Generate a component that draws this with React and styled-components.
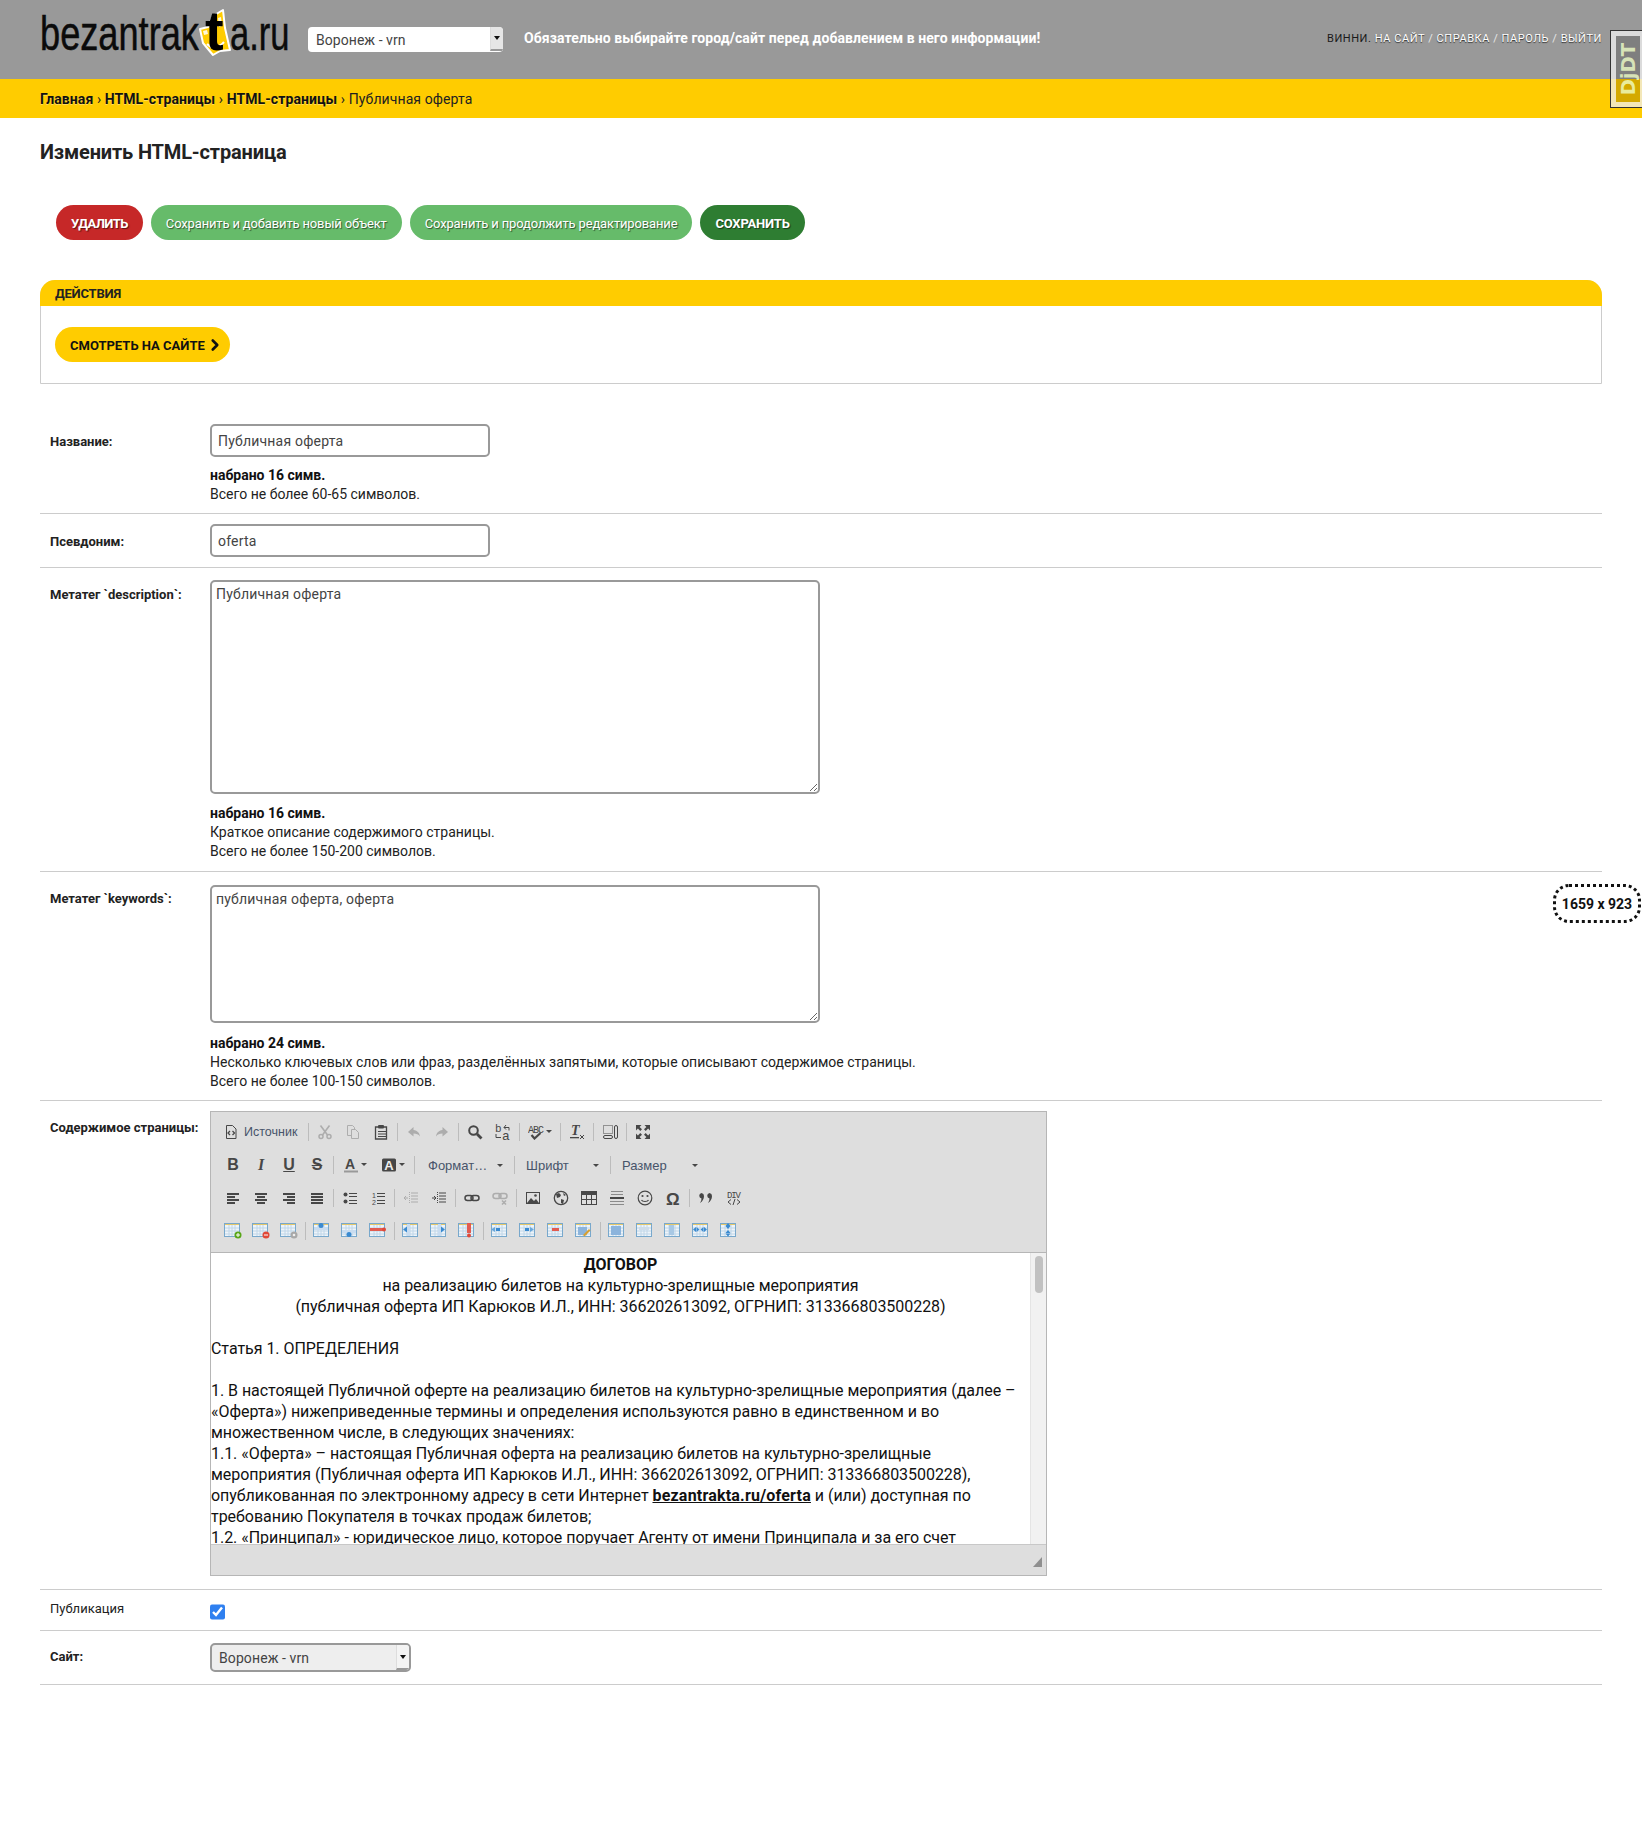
import React from 'react';
import styled, { createGlobalStyle } from 'styled-components';
import { ChevronRight } from 'lucide-react';

const Global = createGlobalStyle`
  html, body { margin: 0; padding: 0; background: #fff; }
  body { font-family: Roboto, "Liberation Sans", sans-serif; font-size: 14px; color: #222; position: relative; min-height: 1823px; }
  * { box-sizing: border-box; }
`;

const Header = styled.header`
  height: 79px;
  background: #999;
  display: flex;
  align-items: flex-start;
  padding: 0 40px;
`;

const Logo = styled.div`
  display: flex;
  width: 268px;
  height: 60px;
  font-family: "Liberation Sans", sans-serif;
  font-size: 48px;
  line-height: 48px;
  color: #0b0b0b;
  -webkit-text-stroke: .5px #0b0b0b;
  padding-top: 10px;
  white-space: nowrap;
  flex-shrink: 0;
`;

const LogoWord = styled.span`
  display: block;
  width: ${p => p.$w}px;
  flex-shrink: 0;
  transform: scaleX(${p => p.$s});
  transform-origin: left center;
`;

const LogoFace = styled.span`
  position: relative;
  display: block;
  width: 31px;
  height: 48px;
  flex-shrink: 0;
  svg { position: absolute; left: -19px; top: -10px; }
`;

const LogoT = styled.span`
  position: absolute;
  left: 6px;
  top: -7px;
  font-weight: 700;
  font-size: 56px;
  line-height: 56px;
  color: #000;
  -webkit-text-stroke: 0;
`;

const HeaderSelect = styled.div`
  width: 195px;
  height: 25px;
  margin-top: 27px;
  background: #fff;
  border-radius: 4px;
  display: flex;
  justify-content: space-between;
  font-size: 14px;
  line-height: 26px;
  letter-spacing: .05px;
  color: #444;
  padding-left: 8px;
  flex-shrink: 0;
  overflow: hidden;
`;

const SelectArrow = styled.span`
  width: 13px;
  background: ${p => (p.$muted ? '#f4f4f4' : '#e6e6e6')};
  border-bottom: 2px solid #999;
  border-left: 1px solid #ddd;
  height: ${p => (p.$muted ? '100%' : '24px')};
  display: flex;
  align-items: center;
  justify-content: center;
  &::after {
    content: '';
    border-left: 3px solid transparent;
    border-right: 3px solid transparent;
    border-top: 4px solid #111;
  }
`;

const Notice = styled.div`
  margin: 29px 0 0 21px;
  font-size: 14px;
  line-height: 19px;
  font-weight: 700;
  letter-spacing: .085px;
  color: #fff;
  white-space: nowrap;
`;

const UserTools = styled.div`
  margin: 31px 0 0 auto;
  font-size: 11px;
  line-height: 16px;
  letter-spacing: .55px;
  text-transform: uppercase;
  color: #e8e8e8;
  white-space: nowrap;
  a { color: #fff; text-shadow: 0 1px 1px #333; }
  strong { font-weight: 400; color: #1a1a1a; }
`;

const Crumbs = styled.div`
  height: 39px;
  background: #fc0;
  padding: 1px 40px 0;
  line-height: 39px;
  font-size: 14px;
  letter-spacing: .1px;
  color: #222;
  a { font-weight: 700; letter-spacing: .08px; color: #111; text-shadow: 0 1px 0 rgba(255, 255, 255, .35); }
`;

const Handle = styled.div`
  position: absolute;
  top: 31px;
  right: 0;
  width: 31px;
  height: 76px;
  border: 5px solid rgba(255, 255, 255, .72);
  border-right-width: 2px;
  outline: 1px solid #333;
  background: rgba(0, 0, 0, .17);
  display: flex;
  align-items: center;
  justify-content: center;
  span {
    writing-mode: vertical-rl;
    transform: rotate(180deg);
    font-family: "DejaVu Sans", sans-serif;
    font-weight: 700;
    font-size: 19.5px;
    color: rgba(240, 255, 200, .78);
  }
`;

const SizeBadge = styled.div`
  position: absolute;
  top: 884px;
  right: 1px;
  width: 88px;
  height: 39px;
  border: 3px dotted #111;
  border-radius: 16px;
  display: flex;
  align-items: center;
  justify-content: center;
  font-size: 14px;
  font-weight: 700;
  color: #111;
`;

const Main = styled.main`
  padding: 0 40px;
`;

const Title = styled.h1`
  margin: 0;
  padding-top: 21px;
  height: 87px;
  font-size: 20px;
  line-height: 26px;
  font-weight: 700;
  letter-spacing: -.15px;
  color: #222;
`;

const SubmitRow = styled.div`
  display: flex;
  gap: 8px;
  padding-left: 16px;
`;

const Pill = styled.button`
  height: 35px;
  border: 0;
  border-radius: 18px;
  padding: 1px 15px 0;
  background: ${p => p.$bg};
  color: #fff;
  font-family: inherit;
  font-size: 13px;
  font-weight: ${p => (p.$strong ? 700 : 400)};
  letter-spacing: ${p => p.$ls ?? -0.15}px;
  text-transform: ${p => (p.$strong ? 'uppercase' : 'none')};
  text-shadow: 1px 1px 1px rgba(0, 0, 0, .55);
`;

const Actions = styled.section`
  margin-top: 40px;
  height: 104px;
  border: 1px solid #ccc;
  border-radius: 15px 15px 0 0;
`;

const ActionsHead = styled.h2`
  margin: -1px -1px 0;
  height: 26px;
  background: #fc0;
  border-radius: 15px 15px 0 0;
  padding: 4px 15px 0;
  font-size: 13px;
  line-height: 19px;
  font-weight: 700;
  letter-spacing: -.2px;
  text-transform: uppercase;
  color: #222;
`;

const ViewLink = styled.a`
  display: inline-flex;
  align-items: center;
  gap: 1px;
  height: 35px;
  margin: 21px 0 0 14px;
  padding: 1px 6px 0 15px;
  border-radius: 18px;
  background: #fc0;
  font-size: 13px;
  font-weight: 700;
  text-transform: uppercase;
  color: #111;
`;

const Form = styled.form`
  margin-top: 30px;
`;

const Row = styled.div`
  display: flex;
  border-bottom: 1px solid #ccc;
  padding: ${p => p.$top ?? 10}px 0 ${p => p.$bottom ?? 10}px;
`;

const Label = styled.label`
  width: 170px;
  flex-shrink: 0;
  padding: ${p => p.$top ?? 8}px 0 0 10px;
  font-size: 13px;
  line-height: 19px;
  font-weight: ${p => (p.$plain ? 400 : 700)};
  color: #222;
`;

const TextInput = styled.input`
  display: block;
  width: 280px;
  height: 33px;
  border: 2px solid #999;
  border-radius: 5px;
  padding: 0 6px;
  font-family: inherit;
  font-size: 14px;
  letter-spacing: .2px;
  color: #444;
  background: #fff;
`;

const TextArea = styled.textarea`
  display: block;
  width: 610px;
  height: ${p => p.$h}px;
  border: 2px solid #999;
  border-radius: 5px;
  padding: 3px 4px;
  font-family: inherit;
  font-size: 14px;
  line-height: 19px;
  letter-spacing: .2px;
  color: #444;
  background: #fff;
`;

const Help = styled.div`
  margin-top: ${p => p.$top ?? 9}px;
  font-size: 14px;
  line-height: 19px;
  color: #222;
  strong { display: block; font-weight: 700; color: #111; }
`;

const Editor = styled.div`
  width: 837px;
  height: 465px;
  border: 1px solid #b6b6b6;
  background: #dedede;
  display: flex;
  flex-direction: column;
  position: relative;
`;

const Toolbar = styled.div`
  height: 141px;
  padding: 3px 0 0 8px;
  border-bottom: 1px solid #b6b6b6;
  flex-shrink: 0;
`;

const ToolRow = styled.div`
  height: 33px;
  display: flex;
  align-items: center;
`;

const ToolBtn = styled.span`
  width: ${p => p.$w ?? 28}px;
  height: 26px;
  display: flex;
  align-items: center;
  justify-content: center;
  flex-shrink: 0;
  color: #474747;
  opacity: ${p => (p.$off ? 0.32 : 1)};
  svg { display: block; }
`;

const Glyph = styled.span`
  font-family: ${p => (p.$serif ? '"Liberation Serif", serif' : '"Liberation Sans", sans-serif')};
  font-size: 16px;
  font-weight: 700;
  font-style: ${p => (p.$italic ? 'italic' : 'normal')};
  text-decoration: ${p => (p.$line ? p.$line : 'none')};
  color: #474747;
`;

const Sep = styled.i`
  display: block;
  width: 1px;
  height: 18px;
  margin: 0 2px;
  background: #bcbcbc;
  flex-shrink: 0;
`;

const SourceBtn = styled.span`
  display: flex;
  align-items: center;
  gap: 5px;
  padding: 0 6px 0 4px;
  width: 87px;
  flex-shrink: 0;
  font-family: "Liberation Sans", sans-serif;
  font-size: 12.5px;
  color: #47546a;
`;

const Combo = styled.span`
  width: ${p => p.$w}px;
  display: flex;
  align-items: center;
  justify-content: space-between;
  padding: 2px 9px 0 ${p => p.$pad ?? 11}px;
  font-family: "Liberation Sans", sans-serif;
  font-size: 13px;
  color: #47546a;
  flex-shrink: 0;
`;

const Caret = styled.i`
  display: block;
  margin-left: ${p => p.$gap ?? 0}px;
  border-left: 3px solid transparent;
  border-right: 3px solid transparent;
  border-top: 3px solid #474747;
`;

const EditBody = styled.div`
  flex: 1;
  display: flex;
  min-height: 0;
  background: #fff;
`;

const Content = styled.div`
  flex: 1;
  overflow: hidden;
  padding-top: 1px;
  font-size: 16px;
  line-height: 21px;
  letter-spacing: -.04px;
  color: #111;
  p { margin: 0; }
  a { font-weight: 700; letter-spacing: .2px; color: #111; text-decoration: underline; }
`;

const Center = styled.p`
  text-align: center;
  font-weight: ${p => (p.$b ? 700 : 400)};
`;

const ScrollTrack = styled.div`
  width: 16px;
  flex-shrink: 0;
  background: #f1f1f1;
  border-left: 1px solid #e4e4e4;
  padding: 3px 3px 0 4px;
`;

const ScrollThumb = styled.div`
  height: 37px;
  background: #c1c1c1;
  border-radius: 4px;
`;

const EditFoot = styled.div`
  height: 31px;
  flex-shrink: 0;
  border-top: 1px solid #c8c8c8;
  background: #dedede;
`;

const Resizer = styled.span`
  position: absolute;
  right: 4px;
  bottom: 8px;
  border-left: 9px solid transparent;
  border-bottom: 10px solid #8f8f8f;
`;

const Check = styled.input`
  display: block;
  width: 15px;
  height: 16px;
  margin: 5px 0 0;
  accent-color: #2f80f0;
`;

const SiteSelect = styled.div`
  width: 201px;
  height: 29px;
  border: 2px solid #999;
  border-radius: 5px;
  background: #eee;
  display: flex;
  justify-content: space-between;
  padding-left: 7px;
  font-size: 14px;
  line-height: 26px;
  letter-spacing: .1px;
  color: #444;
  overflow: hidden;
`;

const svg = (children, w = 16, h = 16) => (
  <svg width={w} height={h} viewBox={`0 0 ${w} ${h}`} fill="currentColor">{children}</svg>
);
const line = { fill: 'none', stroke: 'currentColor' };

const bars = (rows) => svg(rows.map(([x, y, w, h = 2], i) => <rect key={i} x={x} y={y} width={w} height={h} />));

const icons = {
  source: svg(<>
    <path {...line} d="M3.5 1.5h6l3.5 3.5v9.500h-9.500z" />
    <path {...line} strokeWidth="1.3" d="M7 7l-2 2 2 2M9.5 7l2 2-2 2" />
  </>),
  cut: svg(<>
    <circle {...line} strokeWidth="1.5" cx="4" cy="12.5" r="2" />
    <circle {...line} strokeWidth="1.5" cx="12" cy="12.5" r="2" />
    <path {...line} strokeWidth="1.6" d="M3.5 1.5l7 9.500M12.5 1.5l-7 9.500" />
  </>),
  copy: svg(<>
    <path {...line} d="M2.5 1.5h5l2 2v8h-7z" />
    <path {...line} fill="#dedede" d="M6.5 5.5h4l3 3v6h-7z" />
  </>),
  paste: svg(<>
    <path {...line} strokeWidth="1.3" d="M5 3H2.5v12h11V3H11" />
    <rect x="5" y="1" width="6" height="3.5" rx="1" />
    <path {...line} d="M5 7.5h8M5 10h8M5 12.5h8" />
  </>),
  undo: svg(<path d="M7.5 3L2 8l5.5 4.5V9.6c3 0 5 .8 6.5 3C13.6 9 11.6 6.6 7.5 6z" />),
  redo: svg(<path d="M8.5 3L14 8l-5.5 4.5V9.6c-3 0-5 .8-6.5 3C2.4 9 4.4 6.6 8.5 6z" />),
  find: svg(<>
    <circle {...line} strokeWidth="2" cx="6.5" cy="6.5" r="4.3" />
    <path {...line} strokeWidth="2.8" d="M10 10l4.500 4.500" />
  </>),
  replace: svg(<>
    <text x="0" y="8" fontSize="11" fontFamily="Liberation Mono, monospace">b</text>
    <text x="7" y="15.5" fontSize="13" fontFamily="Liberation Mono, monospace">a</text>
    <path {...line} d="M9 3.500h5v3M11 1l-2 2.500 2 2M1 10v3.500h5" />
  </>),
  spell: svg(<>
    <text x="0" y="8.5" fontSize="10" fontFamily="Liberation Mono, monospace" textLength="16">ABC</text>
    <path {...line} strokeWidth="2.2" d="M3.5 11l3 3.500 6-5.500" />
  </>),
  clear: svg(<>
    <text x="2" y="11" fontSize="14" fontWeight="700" fontStyle="italic" fontFamily="Liberation Serif, serif">T</text>
    <rect x="1" y="13" width="9" height="1.3" />
    <path {...line} d="M11 11l4 4M15 11l-4 4" />
  </>),
  blocks: svg(<>
    <path {...line} strokeDasharray="1 1" d="M1.5 1.5h9v8h-9z" />
    <rect {...line} x="12.5" y="1.5" width="3" height="13" rx="1.5" />
    <rect {...line} x="1.5" y="11.5" width="9" height="3" rx="1.5" />
  </>),
  max: svg(<path d="M1 1h5.500L4.600 2.900 7 5.300 5.300 7 2.900 4.600 1 6.500zM15 1v5.500l-1.900-1.900L10.700 7 9 5.300l2.400-2.400L9.500 1zM1 15V9.500l1.900 1.900L5.300 9 7 10.700l-2.400 2.400L6.500 15zM15 15H9.500l1.900-1.900L9 10.700 10.700 9l2.400 2.400L15 9.500z" />),
  left: bars([[2, 3, 12], [2, 6, 8], [2, 9, 12], [2, 12, 8]]),
  center: bars([[2, 3, 12], [4, 6, 8], [2, 9, 12], [4, 12, 8]]),
  right: bars([[2, 3, 12], [6, 6, 8], [2, 9, 12], [6, 12, 8]]),
  justify: bars([[2, 3, 12], [2, 6, 12], [2, 9, 12], [2, 12, 12]]),
  bullets: svg(<>
    <circle cx="3.5" cy="4.5" r="2" /><circle cx="3.5" cy="11.5" r="2" />
    <rect x="7" y="3" width="8" height="1" /><rect x="7" y="6" width="8" height="1" />
    <rect x="7" y="10" width="8" height="1" /><rect x="7" y="13" width="8" height="1" />
  </>),
  numbers: svg(<>
    <text x="2" y="7.5" fontSize="7" fontFamily="Liberation Sans, sans-serif">1</text>
    <text x="2" y="15" fontSize="7" fontFamily="Liberation Sans, sans-serif">2</text>
    <rect x="7" y="3" width="8" height="1" /><rect x="7" y="6" width="8" height="1" />
    <rect x="7" y="10" width="8" height="1" /><rect x="7" y="13" width="8" height="1" />
  </>),
  outdent: svg(<>
    <path d="M1 8h4M3 6l-2 2 2 2" fill="none" stroke="currentColor" />
    <path {...line} strokeDasharray="1 1" d="M6.500 2v12" />
    <path {...line} d="M8 3h7M8 6h7M8 9h7M8 12h7" />
  </>),
  indent: svg(<>
    <path d="M1 8h4M3 6l2 2-2 2" fill="none" stroke="currentColor" />
    <path {...line} strokeDasharray="1 1" d="M6.500 2v12" />
    <path {...line} d="M8 3h7M8 6h7M8 9h7M8 12h7" />
  </>),
  link: svg(<>
    <rect {...line} strokeWidth="1.5" x="1" y="5.5" width="8" height="5" rx="2.5" />
    <rect {...line} strokeWidth="1.5" x="7" y="5.5" width="8" height="5" rx="2.5" />
  </>),
  unlink: svg(<>
    <rect {...line} strokeWidth="1.5" x="1" y="3.5" width="8" height="5" rx="2.5" />
    <rect {...line} strokeWidth="1.5" x="7" y="3.5" width="8" height="5" rx="2.5" />
    <path {...line} strokeWidth="1.5" d="M10 10.500l4 4M14 10.500l-4 4" />
  </>),
  image: svg(<>
    <path fillRule="evenodd" d="M1 2h14v12H1zM2 3v10h12V3z" />
    <path d="M2 13l4-5 3 3 2-2 3 4z" /><circle cx="10.5" cy="5.5" r="1.3" />
  </>),
  globe: svg(<>
    <circle {...line} strokeWidth="1.3" cx="8" cy="8" r="6.7" />
    <path d="M3 4l3-1 2 2-1 2-3 1zM8 9l3 1-1 4-2-1zM10 3l3 2-2 1z" />
  </>),
  table: svg(<path fillRule="evenodd" d="M0 1h16v14H0zM1 5v4h4V5zm5 0v4h4V5zm5 0v4h4V5zM1 10v4h4v-4zm5 0v4h4v-4zm5 0v4h4v-4z" />),
  hr: svg(<>
    <rect x="1" y="7" width="14" height="2" />
    <path {...line} opacity=".55" d="M2 1.500h12M2 4.500h12M1 11.500h14M1 14.500h14" />
  </>),
  smile: svg(<>
    <circle {...line} strokeWidth="1.2" cx="8" cy="8" r="6.8" />
    <circle cx="5.5" cy="6" r="1.1" /><circle cx="10.5" cy="6" r="1.1" />
    <path {...line} strokeWidth="1.2" d="M4.500 10c1 2 6 2 7 0" />
  </>),
  omega: svg(<text x="1" y="14.5" fontSize="17" fontWeight="700" fontFamily="Liberation Sans, sans-serif">Ω</text>),
  quote: svg(<path d="M3.500 3a3 3 0 0 1 2.500 3c0 3-1.500 5.500-4 7 1-1.500 1.500-3 1.500-4.500a2.800 2.800 0 0 1 0-5.500zM11.500 3a3 3 0 0 1 2.500 3c0 3-1.500 5.500-4 7 1-1.500 1.500-3 1.500-4.500a2.800 2.800 0 0 1 0-5.500z" />),
  div: svg(<>
    <text x="1" y="7.5" fontSize="9" fontFamily="Liberation Mono, monospace" textLength="14">DIV</text>
    <path {...line} d="M5 9.500L2 12l3 2.500M11 9.500l3 2.500-3 2.500M9 9L7 15" />
  </>),
  colorA: svg(<>
    <text x="2" y="11.5" fontSize="14" fontWeight="700" fontFamily="Liberation Sans, sans-serif">A</text>
    <rect x="1" y="13.5" width="14" height="2" fill="#999" />
  </>),
  bgA: svg(<>
    <rect x="1" y="1.5" width="14" height="13" rx="1.5" />
    <text x="3.2" y="12.5" fontSize="13" fontWeight="700" fill="#eee" fontFamily="Liberation Sans, sans-serif">A</text>
  </>),
};

const Badge = ({ fill, children }) => (
  <g>
    <circle cx="14" cy="13" r="3.5" fill={fill} />
    {children}
  </g>
);

const tableOverlay = {
  add: <Badge fill="#58a618"><path d="M12 13h4M14 11v4" stroke="#fff" /></Badge>,
  del: <Badge fill="#e04838"><path d="M12 13h4" stroke="#fff" /></Badge>,
  prop: <Badge fill="#a8a8a8"><circle cx="14" cy="13" r="1.3" fill="#eee" /></Badge>,
  rowUp: <><rect x="1" y="5" width="14" height="3" fill="#c8dcf0" /><circle cx="8" cy="3.5" r="2.5" fill="#3a8ad0" /></>,
  rowDown: <><rect x="1" y="8" width="14" height="3" fill="#c8dcf0" /><circle cx="8" cy="12.5" r="2.5" fill="#3a8ad0" /></>,
  rowDel: <><rect x="1" y="6" width="13" height="3" fill="#e25b50" /><circle cx="15" cy="7.5" r="2" fill="#e04838" /></>,
  colLeft: <><rect x="5" y="2" width="3" height="12" fill="#c8dcf0" /><path d="M1 7.5L5 4.500v6z" fill="#3a8ad0" /></>,
  colRight: <><rect x="8" y="2" width="3" height="12" fill="#c8dcf0" /><path d="M15 7.5l-4-3v6z" fill="#3a8ad0" /></>,
  colDel: <><rect x="9" y="1" width="4" height="10" fill="#e25b50" /><circle cx="11" cy="13.5" r="2" fill="#e04838" /></>,
  cellLeft: <><rect x="5" y="6" width="4" height="3" fill="#3a8ad0" /><path d="M0 7.5l4-2.500v5z" fill="#6aa8dc" /></>,
  cellRight: <><rect x="6" y="6" width="4" height="3" fill="#3a8ad0" /><path d="M15 7.5l-4-2.500v5z" fill="#6aa8dc" /></>,
  cellDel: <rect x="5" y="6" width="7" height="3" fill="#e25b50" />,
  cellEdit: <><rect x="3" y="5" width="9" height="8" fill="#8cb4dc" /><path d="M8 13l6-6 1.500 1.500-6 6z" fill="#d8a030" /></>,
  all: <rect x="3" y="4" width="10" height="9" fill="#8cb4dc" />,
  rowMid: <rect x="3" y="5" width="10" height="3" fill="#cfdce8" />,
  colMid: <rect x="5" y="3" width="5" height="10" fill="#a8c8e4" />,
  splitH: <path d="M1 7.5l3-2.500v5zM7.5 7.5l-3-2.500v5zM8.5 7.5l3-2.500v5zM15 7.5l-3-2.500v5z" fill="#3a8ad0" />,
  splitV: <path d="M8 1l-2.500 3h5zM8 7L5.500 4h5zM8 8l-2.500 3h5zM8 14.500l-2.500-3h5z" fill="#3a8ad0" />,
};

function TableIcon({ kind }) {
  return (
    <svg width="18" height="17" viewBox="0 0 18 17">
      <rect x=".5" y="1.5" width="15" height="13" fill="#eef4f9" stroke="#78a8cc" />
      <rect x="1" y="2" width="14" height="1" fill="#e6c86a" />
      <path d="M1 6h14M1 9h14M1 12h14M5 3v11M8 3v11M11 3v11" stroke="#c0d6e8" fill="none" />
      {tableOverlay[kind]}
    </svg>
  );
}

const row1 = [
  ['cut', true], ['copy', true], ['paste'], '|', ['undo', true], ['redo', true], '|',
  ['find'], ['replace'], '|',
];
const row3 = [
  ['left'], ['center'], ['right'], ['justify'], '|', ['bullets'], ['numbers'], '|',
  ['outdent', true], ['indent'], '|', ['link'], ['unlink', true], '|',
  ['image'], ['globe'], ['table'], ['hr'], ['smile'], ['omega'], '|', ['quote'], ['div'],
];
const row4 = [
  'add', 'del', 'prop', '|', 'rowUp', 'rowDown', 'rowDel', '|', 'colLeft', 'colRight', 'colDel', '|',
  'cellLeft', 'cellRight', 'cellDel', 'cellEdit', '|', 'all', 'rowMid', 'colMid', 'splitH', 'splitV',
];

const renderTools = (items) => items.map((it, i) => (
  it === '|'
    ? <Sep key={i} />
    : <ToolBtn key={i} $off={it[1]}>{icons[it[0]]}</ToolBtn>
));

function EditorToolbar() {
  return (
    <Toolbar>
      <ToolRow>
        <SourceBtn><ToolBtn $w={16}>{icons.source}</ToolBtn>Источник</SourceBtn>
        <Sep />
        {renderTools(row1)}
        <ToolBtn $w={36}>{icons.spell}<Caret $gap={2} /></ToolBtn>
        <Sep />
        <ToolBtn>{icons.clear}</ToolBtn>
        <Sep />
        <ToolBtn>{icons.blocks}</ToolBtn>
        <Sep />
        <ToolBtn>{icons.max}</ToolBtn>
      </ToolRow>
      <ToolRow>
        <ToolBtn><Glyph>B</Glyph></ToolBtn>
        <ToolBtn><Glyph $serif $italic>I</Glyph></ToolBtn>
        <ToolBtn><Glyph $line="underline">U</Glyph></ToolBtn>
        <ToolBtn><Glyph $line="line-through">S</Glyph></ToolBtn>
        <Sep />
        <ToolBtn $w={38}>{icons.colorA}<Caret $gap={2} /></ToolBtn>
        <ToolBtn $w={38}>{icons.bgA}<Caret $gap={2} /></ToolBtn>
        <Sep />
        <Combo $w={95}>Формат…<Caret /></Combo>
        <Sep />
        <Combo $w={91} $pad={9}>Шрифт<Caret /></Combo>
        <Sep />
        <Combo $w={94} $pad={9}>Размер<Caret /></Combo>
      </ToolRow>
      <ToolRow>{renderTools(row3)}</ToolRow>
      <ToolRow>
        {row4.map((k, i) => (k === '|' ? <Sep key={i} /> : <ToolBtn key={i}><TableIcon kind={k} /></ToolBtn>))}
      </ToolRow>
    </Toolbar>
  );
}

function App() {
  return (
    <>
      <Global />
      <Header>
        <Logo>
          <LogoWord $w={159} $s={0.754}>bezantrak</LogoWord>
          <LogoFace>
            <svg width="70" height="66" viewBox="0 0 70 66">
              <path d="M20 29l8-2 5-11 10-6 2 18 5 22-10 1-7 4-10-12z" fill="#fc0" stroke="#fff" strokeWidth="2" strokeLinejoin="round" />
              <path d="M23 31l4-1 1 4-4 1zM38 18l3-1 1 9-3 1z" fill="#fff" opacity=".85" />
              <path d="M27 44c5 5 12 4 17-2" fill="none" stroke="#fff" strokeWidth="2" />
            </svg>
            <LogoT>t</LogoT>
          </LogoFace>
          <LogoWord $w={58} $s={0.72}>a.ru</LogoWord>
        </Logo>
        <HeaderSelect>Воронеж - vrn<SelectArrow /></HeaderSelect>
        <Notice>Обязательно выбирайте город/сайт перед добавлением в него информации!</Notice>
        <UserTools>
          <strong>Винни.</strong> <a>На сайт</a> / <a>Справка</a> / <a>Пароль</a> / <a>Выйти</a>
        </UserTools>
      </Header>
      <Crumbs>
        <a>Главная</a> › <a>HTML-страницы</a> › <a>HTML-страницы</a> › Публичная оферта
      </Crumbs>
      <Handle><span>DjDT</span></Handle>
      <SizeBadge>1659 x 923</SizeBadge>
      <Main>
        <Title>Изменить HTML-страница</Title>
        <SubmitRow>
          <Pill $bg="#c62828" $strong $ls={-0.55}>Удалить</Pill>
          <Pill $bg="#66bb6a">Сохранить и добавить новый объект</Pill>
          <Pill $bg="#66bb6a">Сохранить и продолжить редактирование</Pill>
          <Pill $bg="#2e7d32" $strong $ls={-0.2}>Сохранить</Pill>
        </SubmitRow>
        <Actions>
          <ActionsHead>Действия</ActionsHead>
          <ViewLink>Смотреть на сайте <ChevronRight size={18} strokeWidth={3.5} /></ViewLink>
        </Actions>
        <Form>
          <Row $bottom={9}>
            <Label>Название:</Label>
            <div>
              <TextInput readOnly value="Публичная оферта" />
              <Help><strong>набрано 16 симв.</strong>Всего не более 60-65 символов.</Help>
            </div>
          </Row>
          <Row>
            <Label>Псевдоним:</Label>
            <TextInput readOnly value="oferta" />
          </Row>
          <Row $top={12} $bottom={10}>
            <Label $top={5}>Метатег `description`:</Label>
            <div>
              <TextArea readOnly $h={214} value="Публичная оферта" />
              <Help $top={10}>
                <strong>набрано 16 симв.</strong>
                Краткое описание содержимого страницы.<br />
                Всего не более 150-200 символов.
              </Help>
            </div>
          </Row>
          <Row $top={13} $bottom={9}>
            <Label $top={4}>Метатег `keywords`:</Label>
            <div>
              <TextArea readOnly $h={138} value="публичная оферта, оферта" />
              <Help $top={11}>
                <strong>набрано 24 симв.</strong>
                Несколько ключевых слов или фраз, разделённых запятыми, которые описывают содержимое страницы.<br />
                Всего не более 100-150 символов.
              </Help>
            </div>
          </Row>
          <Row $bottom={13}>
            <Label $top={7}>Содержимое страницы:</Label>
            <Editor>
              <EditorToolbar />
              <EditBody>
                <Content>
                  <Center $b>ДОГОВОР</Center>
                  <Center>на реализацию билетов на культурно-зрелищные мероприятия</Center>
                  <Center>(публичная оферта ИП Карюков И.Л., ИНН: 366202613092, ОГРНИП: 313366803500228)</Center>
                  <p>&nbsp;</p>
                  <p>Статья 1. ОПРЕДЕЛЕНИЯ</p>
                  <p>&nbsp;</p>
                  <p>1. В настоящей Публичной оферте на реализацию билетов на культурно-зрелищные мероприятия (далее – «Оферта») нижеприведенные термины и определения используются равно в единственном и во множественном числе, в следующих значениях:</p>
                  <p>1.1. «Оферта» – настоящая Публичная оферта на реализацию билетов на культурно-зрелищные мероприятия (Публичная оферта ИП Карюков И.Л., ИНН: 366202613092, ОГРНИП: 313366803500228), опубликованная по электронному адресу в сети Интернет <a>bezantrakta.ru/oferta</a> и (или) доступная по требованию Покупателя в точках продаж билетов;</p>
                  <p>1.2. «Принципал» - юридическое лицо, которое поручает Агенту от имени Принципала и за его счет</p>
                </Content>
                <ScrollTrack><ScrollThumb /></ScrollTrack>
              </EditBody>
              <EditFoot />
              <Resizer />
            </Editor>
          </Row>
          <Row $top={9} $bottom={10}>
            <Label $plain $top={0}>Публикация</Label>
            <Check type="checkbox" checked readOnly />
          </Row>
          <Row $top={12} $bottom={12}>
            <Label $top={4}>Сайт:</Label>
            <SiteSelect>Воронеж - vrn<SelectArrow $muted /></SiteSelect>
          </Row>
        </Form>
      </Main>
    </>
  );
}

export default App;
